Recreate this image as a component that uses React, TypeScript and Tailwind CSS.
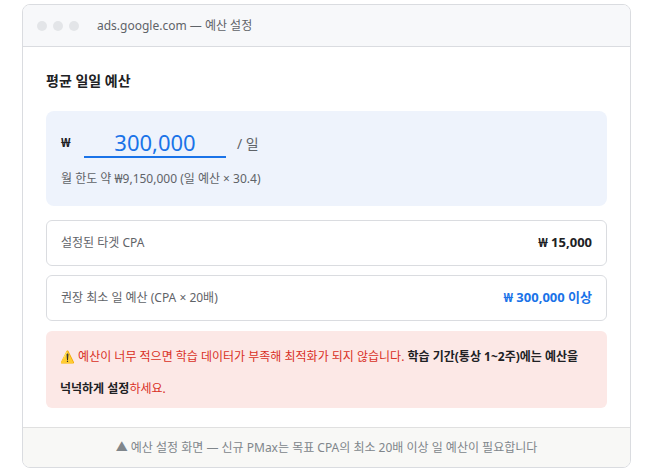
const font = { fontFamily: '"Noto Sans", "Noto Sans CJK KR", sans-serif' };

export default function App() {
  return (
    <div className="w-[659px] h-[472px] bg-white pt-[4px] pl-[22px]" style={font}>
      <div className="w-[609px] h-[464px] border border-[#dadce0] rounded-[8px] overflow-hidden flex flex-col">
        <div className="h-[42px] shrink-0 bg-[#f7f8fa] border-b border-[#dadce0] flex items-center px-[14px] gap-[6px]">
          <span className="w-[10px] h-[10px] rounded-full bg-[#e3e5e8]" />
          <span className="w-[10px] h-[10px] rounded-full bg-[#e3e5e8]" />
          <span className="w-[10px] h-[10px] rounded-full bg-[#e3e5e8]" />
          <span className="ml-[12px] text-[12px] text-[#5f6368]">ads.google.com — 예산 설정</span>
        </div>
        <div className="flex-1 px-[23px] pt-[22px]">
          <div className="text-[14px] font-semibold text-[#202124] leading-[24px]">평균 일일 예산</div>
          <div className="mt-[18px] h-[95px] rounded-[8px] bg-[#eef3fc] px-[15px] pt-[18px]">
            <div className="flex items-end h-[29px]">
              <span className="text-[13px] font-bold text-[#202124] mb-[6px] w-[23px]">₩</span>
              <div className="w-[142px] border-b-2 border-[#1a73e8] text-center text-[22px] text-[#1a73e8] leading-[27px] font-['Roboto',sans-serif]">300,000</div>
              <span className="ml-[11px] text-[14px] text-[#5f6368] mb-[4px]">/ 일</span>
            </div>
            <div className="mt-[12px] text-[12px] text-[#5f6368]">월 한도 약 ₩9,150,000 (일 예산 × 30.4)</div>
          </div>
          <div className="mt-[14px] h-[46px] border border-[#dadce0] rounded-[6px] flex items-center justify-between px-[14px]">
            <span className="text-[12px] text-[#5f6368]">설정된 타겟 CPA</span>
            <span className="text-[13px] font-bold text-[#202124]">₩ 15,000</span>
          </div>
          <div className="mt-[9px] h-[46px] border border-[#dadce0] rounded-[6px] flex items-center justify-between px-[14px]">
            <span className="text-[12px] text-[#5f6368]">권장 최소 일 예산 (CPA × 20배)</span>
            <span className="text-[13px] font-bold text-[#1a73e8]">₩ 300,000 이상</span>
          </div>
          <div className="mt-[10px] h-[77px] rounded-[6px] bg-[#fce8e6] px-[14px] pt-[10px] text-[12px] leading-[32px] text-[#d93025] break-keep">
            ⚠️ 예산이 너무 적으면 학습 데이터가 부족해 최적화가 되지 않습니다. <b className="text-[#202124]">학습 기간(통상 1~2주)에는 예산을 넉넉하게 설정</b>하세요.
          </div>
        </div>
        <div className="h-[40px] shrink-0 bg-[#f8f8f6] border-t border-[#e0e0e0] flex items-center justify-center text-[12px] text-[#80868b]">
          ▲ 예산 설정 화면 — 신규 PMax는 목표 CPA의 최소 20배 이상 일 예산이 필요합니다
        </div>
      </div>
    </div>
  );
}
